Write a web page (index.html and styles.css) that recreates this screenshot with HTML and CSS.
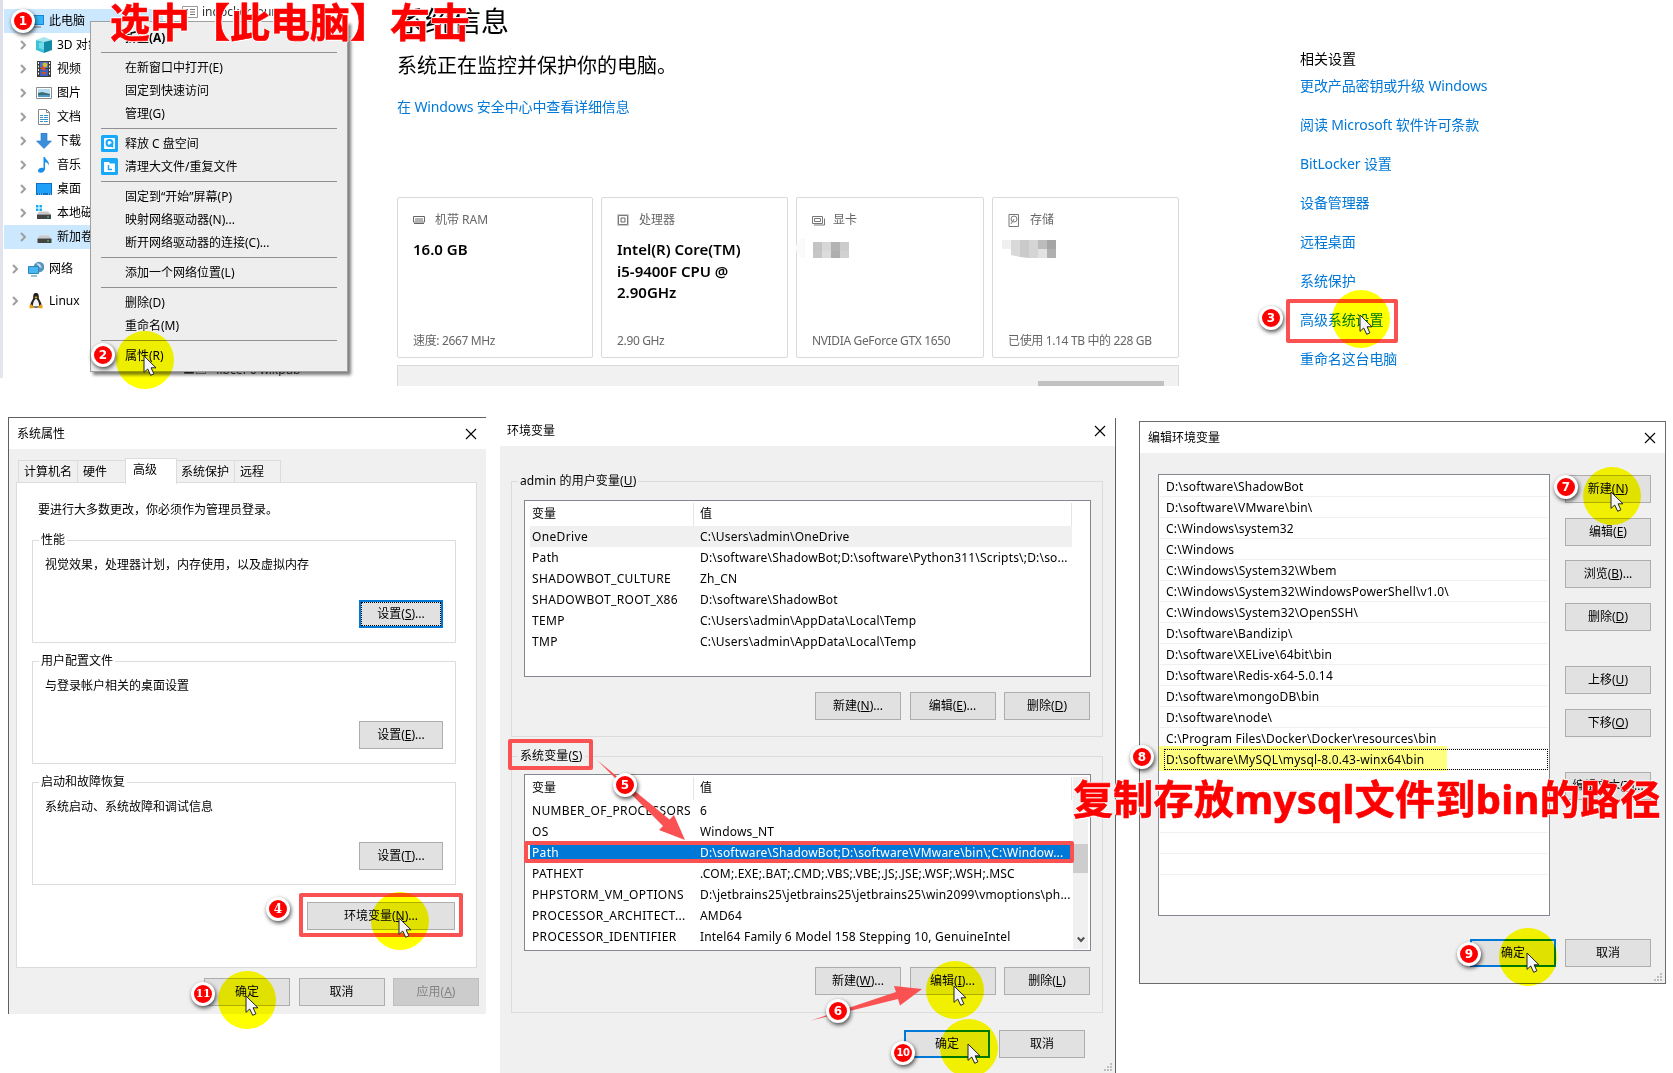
FILE: index.html
```html
<!DOCTYPE html>
<html lang="zh-CN">
<head>
    <meta charset="UTF-8">
    <meta name="viewport" content="width=device-width, initial-scale=1.0">
    <title>配置 MySQL 环境变量</title>
    <link rel="stylesheet" href="styles.css">
</head>
<body>
    <!-- 公用图标 -->
    <svg class="defs" width="0" height="0">
        <symbol id="arrow" viewBox="0 0 6 10"><path d="M1 1l4 4-4 4" fill="none" stroke="#a0a0a0" stroke-width="2"/></symbol>
        <symbol id="close" viewBox="0 0 12 12"><path d="M1 1l10 10M11 1L1 11" fill="none" stroke="#000" stroke-width="1.1"/></symbol>
        <symbol id="cursor" viewBox="-1 -1 15 22"><path d="M0 0V16.4L3.7 13l3 6.3 3.2-1.5-2.8-6H12z" fill="#f4f5fa" stroke="#222" stroke-width="1"/></symbol>
        <symbol id="grip" viewBox="0 0 8 8"><path d="M6 0h2v2H6zM3 3h2v2H3zM6 3h2v2H6zM0 6h2v2H0zM3 6h2v2H3zM6 6h2v2H6z" fill="#bfbfbf"/></symbol>
    </svg>

    <!-- 资源管理器 -->
    <div class="explorer">
        <div class="edge"></div>
        <ul class="tree">
            <li class="on top"><svg class="ic" viewBox="0 0 16 16"><path d="M0 2h16v10H0z" fill="#1a86d8"/><path d="M1 3h14v8H1z" fill="#35b5f5"/><path d="M4 14h9" stroke="#8a9bab" stroke-width="1.5"/></svg>此电脑</li>
            <li><svg class="ch"><use href="#arrow"/></svg><svg class="ic" viewBox="0 0 16 16"><path d="M0 3l8-3 8 3-8 2z" fill="#a6e6ef"/><path d="M0 3l8 2v11l-8-3z" fill="#3cc3d8"/><path d="M16 3L8 5v11l8-3z" fill="#128ba6"/><path d="M3 6l5-1v8l-5-2z" fill="#72dbe8"/></svg>3D 对象</li>
            <li><svg class="ch"><use href="#arrow"/></svg><svg class="ic" viewBox="0 0 16 16"><path d="M1 0h14v16H1z" fill="#3d3d3d"/><path d="M4 1h8v6H4z" fill="#3c77d4"/><path d="M4 8h8v7H4z" fill="#3663c4"/><path d="M2.5 1v14M13.5 1v14" stroke="#fff" stroke-dasharray="2 1.5"/><circle cx="9" cy="4" r="2.4" fill="#e5b52b"/><path d="M4 7l3-2 3 3-2 2zM5 11h6l-3 3z" fill="#d94f25"/></svg>视频</li>
            <li><svg class="ch"><use href="#arrow"/></svg><svg class="ic" viewBox="0 0 16 16"><path d="M.5 2.5h15v11H.5z" fill="#fff" stroke="#8c8c8c"/><path d="M2 4h12v8H2z" fill="#b9dcf5"/><path d="M2 8l4-1 8 2v3H2z" fill="#3b6f73"/><path d="M2 10h12v2H2z" fill="#4f9ac9"/></svg>图片</li>
            <li><svg class="ch"><use href="#arrow"/></svg><svg class="ic" viewBox="0 0 16 16"><path d="M2.500 .5h8l3 3v12h-11z" fill="#fff" stroke="#888"/><path d="M10.500.5v3h3" fill="none" stroke="#888"/><path d="M4 6.500h3M8 6.500h4M4 8.500h3M8 8.500h4M4 10.500h8M4 12.500h3M8 12.500h4" stroke="#3b93cb"/></svg>文档</li>
            <li><svg class="ch"><use href="#arrow"/></svg><svg class="ic" viewBox="0 0 16 16"><path d="M5 0h6v8h4.500L8 15.500.5 8H5z" fill="#3a8fdd" stroke="#2676c2" stroke-width=".6"/></svg>下载</li>
            <li><svg class="ch"><use href="#arrow"/></svg><svg class="ic" viewBox="0 0 16 16"><path d="M7.500 0h1.500c.4 3 4.500 3.500 4 8.500-.5-2-2-3-4-3.300V12c0 4-7 5-7 1.700 0-2.500 3.500-3.500 5.500-2.600z" fill="#1b8fea"/></svg>音乐</li>
            <li><svg class="ch"><use href="#arrow"/></svg><svg class="ic" viewBox="0 0 16 16"><path d="M0 2h16v12H0z" fill="#0d70c4"/><path d="M1 3h14v9H1z" fill="#1da1f8"/><path d="M2 13h5M12 13h3" stroke="#bfe4ff" stroke-dasharray="1 1"/></svg>桌面</li>
            <li><svg class="ch"><use href="#arrow"/></svg><svg class="ic" viewBox="0 0 16 16"><path d="M0 0h2.500v2.500H0zM3.500 0H6v2.500H3.500zM0 3.500h2.500V6H0zM3.500 3.500H6V6H3.500z" fill="#12aef0"/><path d="M3 6.500h9l3 3H1z" fill="#c9c9c9"/><path d="M1 9.500h14V14H1z" fill="#444"/><path d="M11 12h2" stroke="#4be36a"/></svg>本地磁</li>
            <li class="on"><svg class="ch"><use href="#arrow"/></svg><svg class="ic" viewBox="0 0 16 16"><path d="M3.500 6.500h9l3 3H1.500z" fill="#c9c9c9"/><path d="M1.500 9.500h14V14h-14z" fill="#444"/><path d="M11 12h2" stroke="#4be36a"/></svg>新加卷</li>
            <li class="net"><svg class="ch"><use href="#arrow"/></svg><svg class="ic" viewBox="0 0 16 16"><circle cx="11" cy="6" r="5.300" fill="#5795bd"/><path d="M8 2l4 1 2 4-3-1z" fill="#c6dff0"/><path d="M.5 5.500h10v7H.5z" fill="#49b8f2" stroke="#2c84bd"/><path d="M3 15h6" stroke="#7ba9c4" stroke-width="1.500"/></svg>网络</li>
            <li class="linux"><svg class="ch"><use href="#arrow"/></svg><svg class="ic" viewBox="0 0 16 16"><path d="M8 0c2.500 0 2.800 2 2.800 4.500S14 9 13.500 13c-.3 2-9.500 2.500-11 0C2 9 5.200 7 5.200 4.500S5.500 0 8 0z" fill="#222"/><path d="M8 5.500c2 2 3.500 4.500 3 8H5c-.5-3.500 1-6 3-8z" fill="#f4f4f4"/><path d="M6.300 4.200L8 3.300l1.700.9L8 5.500zM1.500 12l2.500-.5 2 3.500-4.500.5zM14.500 12l-2.500-.5-2 3.500 4.500.5z" fill="#e8a317"/></svg>Linux</li>
        </ul>
        <div class="behind behind-top"><svg width="16" height="12" viewBox="0 0 16 12"><path d="M.5.5h15v11H.5z" fill="#fff" stroke="#999"/><path d="M2 3h4v6H2z" fill="#2a7fd0"/><path d="M8 3.500h5M8 6h5M8 8.500h5" stroke="#777"/></svg>indocker.tour</div>
        <div class="behind behind-bottom"><span>■□ &nbsp; libcef 6 w.kpub</span></div>
    </div>

    <!-- 系统信息 -->
    <div class="settings">
        <h1>系统信息</h1>
        <h2>系统正在监控并保护你的电脑。</h2>
        <a class="link">在 Windows 安全中心中查看详细信息</a>
        <div class="cards">
            <div class="card">
                <p class="kind"><svg width="12" height="12" viewBox="0 0 12 12"><path d="M.5 2.500h11v5.500H.5zM1 9.500h10M3 4v3M5 4v3M7 4v3M9 4v3" fill="none" stroke="#666"/></svg>机带 RAM</p>
                <p class="value">16.0 GB</p>
                <p class="note">速度: 2667 MHz</p>
            </div>
            <div class="card">
                <p class="kind"><svg width="12" height="12" viewBox="0 0 12 12"><path d="M1.500 1.500h9v9h-9z" fill="none" stroke="#777"/><path d="M.5.5h11v11H.5z" fill="none" stroke="#999" stroke-dasharray="1 1"/><path d="M4 4h4v4H4z" fill="none" stroke="#666"/></svg>处理器</p>
                <p class="value">Intel(R) Core(TM)<br>i5-9400F CPU @<br>2.90GHz</p>
                <p class="note">2.90 GHz</p>
            </div>
            <div class="card">
                <p class="kind near"><svg width="13" height="12" viewBox="0 0 13 12"><path d="M.5 2.500h10v7H.5zM2.500 4.500h6v3h-6zM2 11h10.500V4.500" fill="none" stroke="#777"/></svg>显卡</p>
                <svg class="mosaic" width="53" height="20" viewBox="0 0 53 20"><path d="M0 10C0 4 4 0 9 0v20C4 20 0 16 0 10z" fill="#fafafa"/><path d="M17 4h9v9h-9z" fill="#c4c4c4"/><path d="M26 4h9v9h-9z" fill="#d7d7d7"/><path d="M35 4h9v9h-9z" fill="#b3b3b3"/><path d="M44 4h9v9h-9z" fill="#ccc"/><path d="M17 13h9v7h-9z" fill="#c6c6c6"/><path d="M26 13h9v7h-9z" fill="#dcdcdc"/><path d="M35 13h9v7h-9z" fill="#aeaeae"/><path d="M44 13h9v7h-9z" fill="#d0d0d0"/></svg>
                <p class="note">NVIDIA GeForce GTX 1650</p>
            </div>
            <div class="card">
                <p class="kind"><svg width="12" height="13" viewBox="0 0 12 13"><path d="M1 .5h9.500v12H1z" fill="none" stroke="#777"/><circle cx="6" cy="5" r="3" fill="none" stroke="#777"/><path d="M6 5l-3 5" stroke="#777"/></svg>存储</p>
                <svg class="mosaic disk" width="56" height="20" viewBox="0 0 56 20"><path d="M2 2h9v9H2z" fill="#f0f0f0"/><path d="M11 2h9v17l-9-2z" fill="#d8d8d8"/><path d="M20 2h9v18l-9-1z" fill="#cacaca"/><path d="M29 2h9v18h-9z" fill="#d5d5d5"/><path d="M38 2h9v9h-9z" fill="#bcbcbc"/><path d="M47 2h9v9h-9z" fill="#a5a5a5"/><path d="M38 11h9v9h-9z" fill="#e2e2e2"/><path d="M47 11h9v9h-9z" fill="#b0b0b0"/></svg>
                <p class="note">已使用 1.14 TB 中的 228 GB</p>
            </div>
        </div>
        <div class="more"><span></span></div>
    </div>

    <div class="related">
        <h3>相关设置</h3>
        <a class="link">更改产品密钥或升级 Windows</a>
        <a class="link">阅读 Microsoft 软件许可条款</a>
        <a class="link">BitLocker 设置</a>
        <a class="link">设备管理器</a>
        <a class="link">远程桌面</a>
        <a class="link">系统保护</a>
        <a class="link">高级系统设置</a>
        <a class="link">重命名这台电脑</a>
    </div>

    <!-- 右键菜单 -->
    <ul class="menu">
        <li class="bold">折叠(A)</li>
        <li class="sep"></li>
        <li>在新窗口中打开(E)</li>
        <li>固定到快速访问</li>
        <li>管理(G)</li>
        <li class="sep"></li>
        <li><svg class="tool" viewBox="0 0 17 17"><rect width="17" height="17" rx="1.500" fill="#1aa8fb"/><rect x="3" y="3" width="11" height="11" rx="1" fill="#fff"/><circle cx="8.500" cy="8" r="3" fill="none" stroke="#1aa8fb" stroke-width="2"/><path d="M9 9l3 3" stroke="#1aa8fb" stroke-width="2"/></svg>释放 C 盘空间</li>
        <li><svg class="tool" viewBox="0 0 17 17"><rect width="17" height="17" rx="1.500" fill="#1aa8fb"/><path d="M3 4h5l1 1.500h5V14H3z" fill="#fff"/><path d="M7.500 7v4.500H11" fill="none" stroke="#1aa8fb" stroke-width="1.500"/></svg>清理大文件/重复文件</li>
        <li class="sep"></li>
        <li>固定到“开始”屏幕(P)</li>
        <li>映射网络驱动器(N)...</li>
        <li>断开网络驱动器的连接(C)...</li>
        <li class="sep"></li>
        <li>添加一个网络位置(L)</li>
        <li class="sep"></li>
        <li>删除(D)</li>
        <li>重命名(M)</li>
        <li class="sep"></li>
        <li>属性(R)</li>
    </ul>

    <!-- 系统属性 -->
    <div class="window sysprop">
        <div class="titlebar">系统属性<svg class="close"><use href="#close"/></svg></div>
        <div class="tabs">
            <span class="tab t1">计算机名</span>
            <span class="tab t2">硬件</span>
            <span class="tab t3 current">高级</span>
            <span class="tab t4">系统保护</span>
            <span class="tab t5">远程</span>
        </div>
        <div class="page">
            <p class="tip">要进行大多数更改，你必须作为管理员登录。</p>
            <fieldset>
                <legend>性能</legend>
                <p>视觉效果，处理器计划，内存使用，以及虚拟内存</p>
                <div class="btn focus">设置(<u>S</u>)...</div>
            </fieldset>
            <fieldset>
                <legend>用户配置文件</legend>
                <p>与登录帐户相关的桌面设置</p>
                <div class="btn">设置(<u>E</u>)...</div>
            </fieldset>
            <fieldset>
                <legend>启动和故障恢复</legend>
                <p>系统启动、系统故障和调试信息</p>
                <div class="btn">设置(<u>T</u>)...</div>
            </fieldset>
            <div class="btn env-btn">环境变量(<u>N</u>)...</div>
        </div>
        <div class="actions">
            <div class="btn">确定</div>
            <div class="btn">取消</div>
            <div class="btn disabled">应用(<u>A</u>)</div>
        </div>
    </div>

    <!-- 环境变量 -->
    <div class="window envvars">
        <div class="titlebar">环境变量<svg class="close"><use href="#close"/></svg></div>
        <fieldset class="user">
            <legend>admin 的用户变量(<u>U</u>)</legend>
            <div class="table">
                <div class="rows">
                    <div class="row head"><span>变量</span><span>值</span></div>
                    <div class="row grey"><span>OneDrive</span><span>C:\Users\admin\OneDrive</span></div>
                    <div class="row"><span>Path</span><span>D:\software\ShadowBot;D:\software\Python311\Scripts\;D:\so...</span></div>
                    <div class="row"><span>SHADOWBOT_CULTURE</span><span>Zh_CN</span></div>
                    <div class="row"><span>SHADOWBOT_ROOT_X86</span><span>D:\software\ShadowBot</span></div>
                    <div class="row"><span>TEMP</span><span>C:\Users\admin\AppData\Local\Temp</span></div>
                    <div class="row"><span>TMP</span><span>C:\Users\admin\AppData\Local\Temp</span></div>
                </div>
            </div>
            <div class="btns">
                <div class="btn">新建(<u>N</u>)...</div>
                <div class="btn">编辑(<u>E</u>)...</div>
                <div class="btn">删除(<u>D</u>)</div>
            </div>
        </fieldset>
        <fieldset class="system">
            <legend>系统变量(<u>S</u>)</legend>
            <div class="table">
                <div class="rows">
                    <div class="row head"><span>变量</span><span>值</span></div>
                    <div class="row"><span>NUMBER_OF_PROCESSORS</span><span>6</span></div>
                    <div class="row"><span>OS</span><span>Windows_NT</span></div>
                    <div class="row selected"><span>Path</span><span>D:\software\ShadowBot;D:\software\VMware\bin\;C:\Window...</span></div>
                    <div class="row"><span>PATHEXT</span><span>.COM;.EXE;.BAT;.CMD;.VBS;.VBE;.JS;.JSE;.WSF;.WSH;.MSC</span></div>
                    <div class="row"><span>PHPSTORM_VM_OPTIONS</span><span>D:\jetbrains25\jetbrains25\jetbrains25\win2099\vmoptions\ph...</span></div>
                    <div class="row"><span>PROCESSOR_ARCHITECT...</span><span>AMD64</span></div>
                    <div class="row"><span>PROCESSOR_IDENTIFIER</span><span>Intel64 Family 6 Model 158 Stepping 10, GenuineIntel</span></div>
                </div>
                <div class="scroll"><i></i><svg width="8" height="7" viewBox="0 0 8 7"><path d="M.8 1.500L4 5l3.200-3.500" fill="none" stroke="#505050" stroke-width="2"/></svg></div>
            </div>
            <div class="btns">
                <div class="btn">新建(<u>W</u>)...</div>
                <div class="btn">编辑(<u>I</u>)...</div>
                <div class="btn">删除(<u>L</u>)</div>
            </div>
        </fieldset>
        <div class="actions">
            <div class="btn default">确定</div>
            <div class="btn">取消</div>
        </div>
        <svg class="grip"><use href="#grip"/></svg>
    </div>

    <!-- 编辑环境变量 -->
    <div class="window editor">
        <div class="titlebar">编辑环境变量<svg class="close"><use href="#close"/></svg></div>
        <div class="content">
            <ul class="paths">
                <li>D:\software\ShadowBot</li>
                <li>D:\software\VMware\bin\</li>
                <li>C:\Windows\system32</li>
                <li>C:\Windows</li>
                <li>C:\Windows\System32\Wbem</li>
                <li>C:\Windows\System32\WindowsPowerShell\v1.0\</li>
                <li>C:\Windows\System32\OpenSSH\</li>
                <li>D:\software\Bandizip\</li>
                <li>D:\software\XELive\64bit\bin</li>
                <li>D:\software\Redis-x64-5.0.14</li>
                <li>D:\software\mongoDB\bin</li>
                <li>D:\software\node\</li>
                <li>C:\Program Files\Docker\Docker\resources\bin</li>
                <li class="focused">D:\software\MySQL\mysql-8.0.43-winx64\bin</li>
                <li></li>
                <li></li>
                <li></li>
                <li></li>
                <li></li>
                <li></li>
            </ul>
            <div class="side">
                <div class="btn">新建(<u>N</u>)</div>
                <div class="btn">编辑(<u>E</u>)</div>
                <div class="btn">浏览(<u>B</u>)...</div>
                <div class="btn">删除(<u>D</u>)</div>
                <div class="btn up">上移(<u>U</u>)</div>
                <div class="btn">下移(<u>O</u>)</div>
                <div class="btn text">编辑文本(<u>T</u>)...</div>
            </div>
        </div>
        <div class="actions">
            <div class="btn default">确定</div>
            <div class="btn">取消</div>
        </div>
        <svg class="grip"><use href="#grip"/></svg>
    </div>

    <!-- 标注 -->
    <div class="frame frame-advanced"></div>
    <div class="frame frame-env"></div>
    <div class="frame frame-system"></div>
    <div class="frame frame-path"></div>
    <div class="marker"></div>

    <div class="spot spot-2"></div>
    <div class="spot spot-3"></div>
    <div class="spot spot-4"></div>
    <div class="spot spot-6"></div>
    <div class="spot spot-7"></div>
    <div class="spot spot-9"></div>
    <div class="spot spot-10"></div>
    <div class="spot spot-11"></div>

    <svg class="arrows" width="340" height="280" viewBox="590 750 340 280">
        <path d="M597 760L669.500 819.500 674 815 685 840 659 830 663 826z" fill="#fa5252"/>
        <path d="M811 1020.500L896 992 894 986 922 989 900 1005.500 898 999z" fill="#fa5252"/>
    </svg>

    <svg class="cursor cursor-2"><use href="#cursor"/></svg>
    <svg class="cursor cursor-3"><use href="#cursor"/></svg>
    <svg class="cursor cursor-4"><use href="#cursor"/></svg>
    <svg class="cursor cursor-6"><use href="#cursor"/></svg>
    <svg class="cursor cursor-7"><use href="#cursor"/></svg>
    <svg class="cursor cursor-9"><use href="#cursor"/></svg>
    <svg class="cursor cursor-10"><use href="#cursor"/></svg>
    <svg class="cursor cursor-11"><use href="#cursor"/></svg>

    <div class="badge badge-1">1</div>
    <div class="badge badge-2">2</div>
    <div class="badge badge-3">3</div>
    <div class="badge badge-4">4</div>
    <div class="badge badge-5">5</div>
    <div class="badge badge-6">6</div>
    <div class="badge badge-7">7</div>
    <div class="badge badge-8">8</div>
    <div class="badge badge-9">9</div>
    <div class="badge badge-10">10</div>
    <div class="badge badge-11">11</div>

    <div class="caption caption-open">选中【此电脑】右击</div>
    <div class="caption caption-copy">复制存放mysql文件到bin的路径</div>
</body>
</html>
```
FILE: styles.css
```css
*{
    margin: 0;
    padding: 0;
    box-sizing: border-box;
}

body{
    position: relative;
    width: 1673px;
    height: 1073px;
    overflow: hidden;
    background: #fff;
    color: #000;
    font: 12px/18px "Noto Sans", "Noto Sans CJK SC", sans-serif;
    white-space: nowrap;
}

ul{
    list-style: none;
}

.defs{
    position: absolute;
}

/* 资源管理器 */
.explorer{
    position: absolute;
    left: 0;
    top: 0;
    width: 350px;
    height: 378px;
    display: flex;
    overflow: hidden;
}

.edge{
    width: 3px;
    background: linear-gradient(#dde0ea, #e3e6ef);
    margin-right: 1px;
}

.tree{
    width: 159px;
    padding-top: 9px;
}

.tree li{
    height: 24px;
    display: flex;
    align-items: center;
    padding-left: 16px;
    font-size: 12px;
}

.tree .on{
    background: #cce8ff;
}

.tree .top{
    padding-left: 24px;
}

.tree .net{
    padding-left: 8px;
    margin-top: 8px;
}

.tree .linux{
    padding-left: 8px;
    margin-top: 8px;
}

.ch{
    width: 6px;
    height: 10px;
    margin-right: 10px;
}

.ic{
    width: 16px;
    height: 16px;
    margin-right: 5px;
}

.behind{
    position: absolute;
    overflow: hidden;
    color: #333;
}

.behind-top{
    left: 182px;
    top: 3px;
    display: flex;
    align-items: center;
    gap: 4px;
}

.behind-bottom{
    left: 183px;
    top: 371px;
    height: 5px;
}

.behind-bottom span{
    display: block;
    margin-top: -10px;
}

/* 系统信息 */
.settings{
    position: absolute;
    left: 397px;
    top: 0;
    width: 782px;
    height: 386px;
    overflow: hidden;
}

.settings h1{
    font-size: 28px;
    line-height: 42px;
    font-weight: 400;
}

.settings h2{
    font-size: 20px;
    line-height: 30px;
    font-weight: 400;
    margin: 9px 0 16px;
}

.link{
    display: block;
    font-size: 14px;
    line-height: 20px;
    color: #0078d7;
    letter-spacing: -.12px;
}

.cards{
    display: grid;
    grid-template-columns: 196px 187px 188px 187px;
    gap: 8px;
    margin-top: 80px;
}

.card{
    height: 161px;
    border: 1px solid #d9d9d9;
    border-radius: 2px;
    padding: 13px 15px;
    display: flex;
    flex-direction: column;
}

.kind{
    display: flex;
    align-items: center;
    gap: 10px;
    color: #666;
}

.kind.near{
    gap: 8px;
}

.value{
    font-size: 15px;
    line-height: 21.500px;
    font-weight: 600;
    margin-top: 10px;
}

.mosaic{
    margin: 9px 0 0 -16px;
}

.disk{
    margin-left: -8px;
}

.note{
    margin-top: auto;
    margin-bottom: -6px;
    color: #666;
    letter-spacing: -.35px;
}

.more{
    height: 24px;
    margin-top: 7px;
    border: 1px solid #d9d9d9;
    background: #f1f1f1;
    padding: 15px 14px 0;
}

.more span{
    display: block;
    width: 126px;
    height: 8px;
    margin-left: auto;
    background: #c1c1c1;
}

.related{
    position: absolute;
    left: 1300px;
    top: 49px;
    display: flex;
    flex-direction: column;
    gap: 19px;
}

.related h3{
    font-size: 14px;
    line-height: 20px;
    font-weight: 400;
    margin-bottom: -12px;
}

/* 右键菜单 */
.menu{
    position: absolute;
    left: 90px;
    top: 21px;
    width: 258px;
    height: 351px;
    padding: 4px 10px 6px;
    background: #eee;
    border: 1px solid #a0a0a0;
    box-shadow: 3px 3px 3px rgba(0, 0, 0, .5);
}

.menu li{
    position: relative;
    height: 23px;
    line-height: 23px;
    padding-left: 24px;
}

.menu .bold{
    font-weight: 700;
}

.menu .sep{
    height: 7px;
    padding-top: 3px;
}

.menu .sep::before{
    content: "";
    display: block;
    height: 1px;
    margin-left: -24px;
    background: #919191;
}

.tool{
    position: absolute;
    left: 0;
    top: 3px;
    width: 17px;
    height: 17px;
}

/* 窗口 */
.window{
    position: absolute;
    background: #f0f0f0;
}

.titlebar{
    height: 31px;
    background: #fff;
    display: flex;
    align-items: center;
    justify-content: space-between;
    padding: 0 9px 0 8px;
}

.close{
    width: 12px;
    height: 12px;
}

fieldset{
    border: 1px solid #dcdcdc;
    min-width: 0;
}

legend{
    height: 18px;
    padding: 0 2px;
}

.btn{
    width: 86px;
    height: 28px;
    line-height: 25px;
    border: 1px solid #adadad;
    background: #e1e1e1;
    text-align: center;
}

.btn u{
    text-underline-offset: 1px;
}

.btn.default{
    border: 2px solid #0078d7;
    line-height: 23px;
}

.btn.focus{
    border: 2px solid #0078d7;
    outline: 1px dotted #000;
    outline-offset: -3px;
    line-height: 23px;
}

.btn.disabled{
    background: #ccc;
    border-color: #bfbfbf;
    color: #838383;
}

.actions{
    display: flex;
    gap: 9px;
    justify-content: flex-end;
}

.grip{
    position: absolute;
    right: 3px;
    bottom: 2px;
    width: 8px;
    height: 8px;
}

.sysprop{
    left: 8px;
    top: 417px;
    width: 478px;
    height: 597px;
    border-left: 1px solid #5f5f5f;
    border-top: 1px solid #5f5f5f;
}

.tabs{
    display: flex;
    align-items: flex-end;
    height: 34px;
    padding-left: 9px;
}

.tab{
    height: 23px;
    border: 1px solid #dcdcdc;
    border-bottom: 0;
    line-height: 21px;
    padding-left: 5px;
}

.tab + .tab{
    margin-left: -1px;
}

.t1{ width: 60px; }
.t2{ width: 49px; }
.t3{ width: 52px; }
.t4{ width: 59px; padding-left: 4px; }
.t5{ width: 47px; }

.tab.current{
    position: relative;
    height: 26px;
    padding-left: 7px;
    margin-bottom: -1px;
    background: #fff;
}

.page{
    width: 461px;
    height: 486px;
    margin-left: 7px;
    margin-top: -1px;
    padding: 18px 20px 0 15px;
    background: #fff;
    border: 1px solid #dcdcdc;
}

.tip{
    margin: 0 0 12px 6px;
}

.page fieldset{
    height: 112px;
    margin-bottom: 9px;
    padding: 7px 12px 0;
    display: flex;
    flex-direction: column;
}

.page legend{
    margin-left: -6px;
}

.page fieldset .btn{
    width: 84px;
    margin: 26px 0 0 auto;
}

.page .env-btn{
    width: 148px;
    margin: 17px 1px 0 auto;
}

.sysprop .actions{
    gap: 8.500px;
    padding: 10px 7px 0 0;
}

.envvars{
    left: 500px;
    top: 418px;
    width: 616px;
    height: 655px;
    border-right: 1px solid #5f5f5f;
}

.envvars .titlebar{
    height: 28px;
    padding: 0 9px 2px 7px;
}

.envvars fieldset{
    width: 592px;
    margin-left: 11px;
    padding: 10px 11px 0 12px;
}

.envvars legend{
    margin-left: -6px;
    letter-spacing: .1px;
}

.envvars .user{
    height: 265px;
    margin-top: 26px;
}

.envvars .system{
    height: 266px;
    margin-top: 10px;
}

.table{
    height: 177px;
    display: flex;
    justify-content: space-between;
    border: 1px solid #828790;
    background: #fff;
    padding: 2px 2px 0 5px;
    overflow: hidden;
}

.system .table{
    margin-top: -1px;
}

.rows{
    width: 542px;
}

.row{
    display: grid;
    grid-template-columns: 168px 374px;
    height: 21px;
    line-height: 21px;
    padding-left: 2px;
    letter-spacing: .35px;
}

.row span{
    overflow: hidden;
}

.row span + span{
    letter-spacing: .18px;
}

.head{
    height: 23px;
    line-height: 21px;
    letter-spacing: 0;
}

.head span{
    border-right: 1px solid #e5e5e5;
    margin-right: 6px;
}

.head span + span{
    margin-right: 2px;
}

.grey{
    background: #f0f0f0;
}

.selected{
    background: #0078d7;
    color: #fff;
}

.scroll{
    width: 15px;
    height: 172px;
    padding-top: 67px;
    background: #f0f0f0;
    text-align: center;
}

.scroll i{
    display: block;
    height: 29px;
    margin-bottom: 57px;
    background: #cdcdcd;
}

.btns{
    display: flex;
    justify-content: flex-end;
    gap: 8.500px;
    margin: 15px 1px 0 0;
}

.system .btns{
    margin-top: 16px;
}

.envvars .actions{
    margin-top: 17px;
    padding-right: 30px;
}

.editor{
    left: 1139px;
    top: 421px;
    width: 527px;
    height: 563px;
    border: 1px solid #6b6b6b;
}

.editor .titlebar{
    padding-right: 9px;
}

.content{
    display: flex;
    gap: 15px;
    padding: 21px 0 0 18px;
}

.paths{
    width: 392px;
    height: 442px;
    padding: 1px;
    border: 1px solid #828790;
    background: #fff;
    letter-spacing: .17px;
}

.paths li{
    height: 21px;
    line-height: 21px;
    padding-left: 6px;
    border-bottom: 1px solid #f0f0f0;
}

.paths li:last-child{
    border-bottom: 0;
}

.paths .focused{
    outline: 1px dotted #000;
    outline-offset: -1px;
    margin-left: 4px;
    padding-left: 2px;
}

.side{
    display: flex;
    flex-direction: column;
    gap: 14.500px;
    padding-top: 1px;
}

.side .up{
    margin-top: 21px;
}

.side .text{
    margin-top: 21px;
}

.editor .actions{
    margin-top: 23px;
    padding-right: 14px;
}

/* 标注 */
.frame{
    position: absolute;
    border: 4px solid #fa5252;
    border-radius: 2px;
}

.frame-advanced{ left: 1286px; top: 299px; width: 112px; height: 44px; }
.frame-env{ left: 299px; top: 893px; width: 164px; height: 44px; }
.frame-system{ left: 508px; top: 739px; width: 85px; height: 31px; }
.frame-path{ left: 524px; top: 841px; width: 550px; height: 22px; }

.marker{
    position: absolute;
    left: 1159px;
    top: 746px;
    width: 288px;
    height: 25px;
    background: #ffff80;
    mix-blend-mode: multiply;
}

.spot{
    position: absolute;
    width: 58px;
    height: 58px;
    border-radius: 50%;
    background: #ff0;
    mix-blend-mode: multiply;
}

.spot-2{ left: 116px; top: 331px; }
.spot-3{ left: 1332px; top: 290px; }
.spot-4{ left: 371px; top: 892px; }
.spot-6{ left: 926px; top: 961px; }
.spot-7{ left: 1583px; top: 467px; }
.spot-9{ left: 1499px; top: 928px; }
.spot-10{ left: 940px; top: 1019px; }
.spot-11{ left: 218px; top: 971px; }

.arrows{
    position: absolute;
    left: 590px;
    top: 750px;
}

.cursor{
    position: absolute;
    width: 15px;
    height: 22px;
}

.cursor-2{ left: 143px; top: 355px; }
.cursor-3{ left: 1359px; top: 314px; }
.cursor-4{ left: 398px; top: 917px; }
.cursor-6{ left: 953px; top: 985px; }
.cursor-7{ left: 1610px; top: 491px; }
.cursor-9{ left: 1526px; top: 952px; }
.cursor-10{ left: 967px; top: 1043px; }
.cursor-11{ left: 245px; top: 995px; }

.badge{
    position: absolute;
    width: 24px;
    height: 24px;
    border: 3px solid #fff;
    border-radius: 50%;
    background: #f00;
    box-shadow: 1px 2px 4px rgba(0, 0, 0, .7);
    color: #fff;
    font: bold 12px/18px "DejaVu Sans", sans-serif;
    text-align: center;
}

.badge-1{ left: 11px; top: 9px; }
.badge-2{ left: 91px; top: 343px; }
.badge-3{ left: 1259px; top: 306px; }
.badge-4{ left: 266px; top: 897px; font-family: "DejaVu Serif", serif; }
.badge-5{ left: 613px; top: 773px; }
.badge-6{ left: 826px; top: 999px; }
.badge-7{ left: 1554px; top: 475px; }
.badge-8{ left: 1130px; top: 745px; }
.badge-9{ left: 1457px; top: 942px; }
.badge-10{ left: 891px; top: 1041px; font-size: 10px; letter-spacing: -.5px; }
.badge-11{ left: 191px; top: 982px; font-family: "DejaVu Serif", serif; font-size: 11px; letter-spacing: -.5px; }

.caption{
    position: absolute;
    color: #f00;
    font: bold 40px/58px "Noto Sans", "Noto Sans CJK SC", sans-serif;
    -webkit-text-stroke: .6px #f00;
    text-shadow: 1px 0 #fff, -1px 0 #fff, 0 1px #fff, 0 -1px #fff, 1px 1px 1px #fff, -1px -1px 1px #fff;
}

.caption-open{
    left: 110px;
    top: -7px;
}

.caption-copy{
    left: 1073px;
    top: 770px;
    letter-spacing: .3px;
}
```
